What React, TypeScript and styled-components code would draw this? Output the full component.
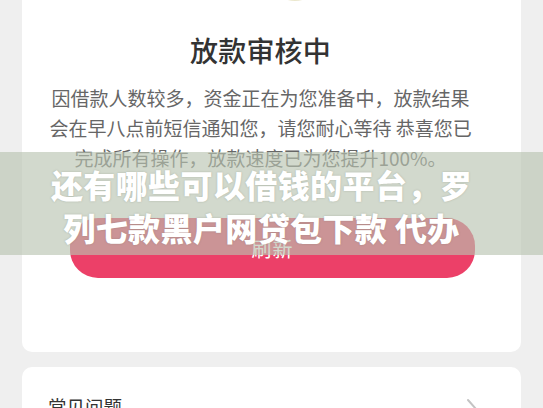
import * as React from "react"
import styled, { createGlobalStyle } from "styled-components"

const Global = createGlobalStyle`
    html, body { margin: 0; padding: 0; background: #efefef; overflow: hidden; }
    body { font-family: "Noto Sans CJK SC", "Noto Sans", "Liberation Sans", sans-serif; }
`

// ---- Página ----
const Page = styled.div`
    position: relative;
    width: 543px; height: 408px;
    padding: 0 22px;
    box-sizing: border-box;
    overflow: hidden;
`
const Card = styled.div<{ $top?: number }>`
    background: #fff;
    border-radius: 10px;
    margin-top: ${(p) => p.$top ?? 0}px;
`
const StatusCard = styled(Card)`
    display: flex; flex-direction: column; align-items: center;
    padding: 0 50px 74px 28px;
`
const TopIcon = styled.div`
    width: 44px; height: 36px; margin-top: 5px; margin-left: 69px;
    border-radius: 50%;
    background: radial-gradient(circle at 50% 30%, #f4f1dc 0%, #e7e3c6 100%);
`
const Title = styled.h1`
    margin: 29px 0 0; font-size: 28px; line-height: 40px; font-weight: 500;
    color: #333; letter-spacing: 0.2px;
`
const Desc = styled.p`
    margin: 13px 0 0; font-size: 19px; line-height: 30px;
    color: #666; text-align: center; white-space: nowrap;
`
const Refresh = styled.button`
    margin-top: 45px; margin-left: 24px; width: 405px; height: 60px; flex-shrink: 0;
    border: none; border-radius: 28px;
    background: #ec4068; color: #fff;
    font-family: inherit; font-size: 20px; letter-spacing: 1px;
`
const FaqRow = styled(Card)`
    display: flex; align-items: flex-start; justify-content: space-between;
    padding: 28px 43px 24px 26px;
    & .label { font-size: 18.5px; line-height: 22px; color: #333; }
    & svg { margin-top: 3px; }
`

// ---- Faixa sobreposta ----
const Banner = styled.div`
    position: absolute; left: 0; right: 0; top: 152px; height: 103px;
    box-sizing: border-box; padding: 11px 20px 0 0;
    background: rgba(185, 196, 177, 0.64);
    text-align: center; color: #fff;
    font-size: 32px; line-height: 43px; font-weight: 900; letter-spacing: 0.4px;
    text-shadow: 0 0 2px rgba(90, 100, 85, 0.35);
    white-space: nowrap;
`

const Chevron = () =>
    <svg width="12" height="22" viewBox="0 0 12 22" fill="none">
        <polyline points="2,2 10,11 2,20" stroke="#c4c4c4" strokeWidth="2" strokeLinecap="round" strokeLinejoin="round" />
    </svg>

export default function App() {
    return <>
        <Global />
        <Page>
            <StatusCard $top={-40}>
                <TopIcon />
                <Title>放款审核中</Title>
                <Desc>
                    因借款人数较多，资金正在为您准备中，放款结果<br />
                    会在早八点前短信通知您，请您耐心等待 恭喜您已<br />
                    完成所有操作，放款速度已为您提升100%。
                </Desc>
                <Refresh>刷新</Refresh>
            </StatusCard>
            <FaqRow $top={15}>
                <span className="label">常见问题</span>
                <Chevron />
            </FaqRow>
            <Banner>
                还有哪些可以借钱的平台，罗<br />
                列七款黑户网贷包下款 代办
            </Banner>
        </Page>
    </>
}
